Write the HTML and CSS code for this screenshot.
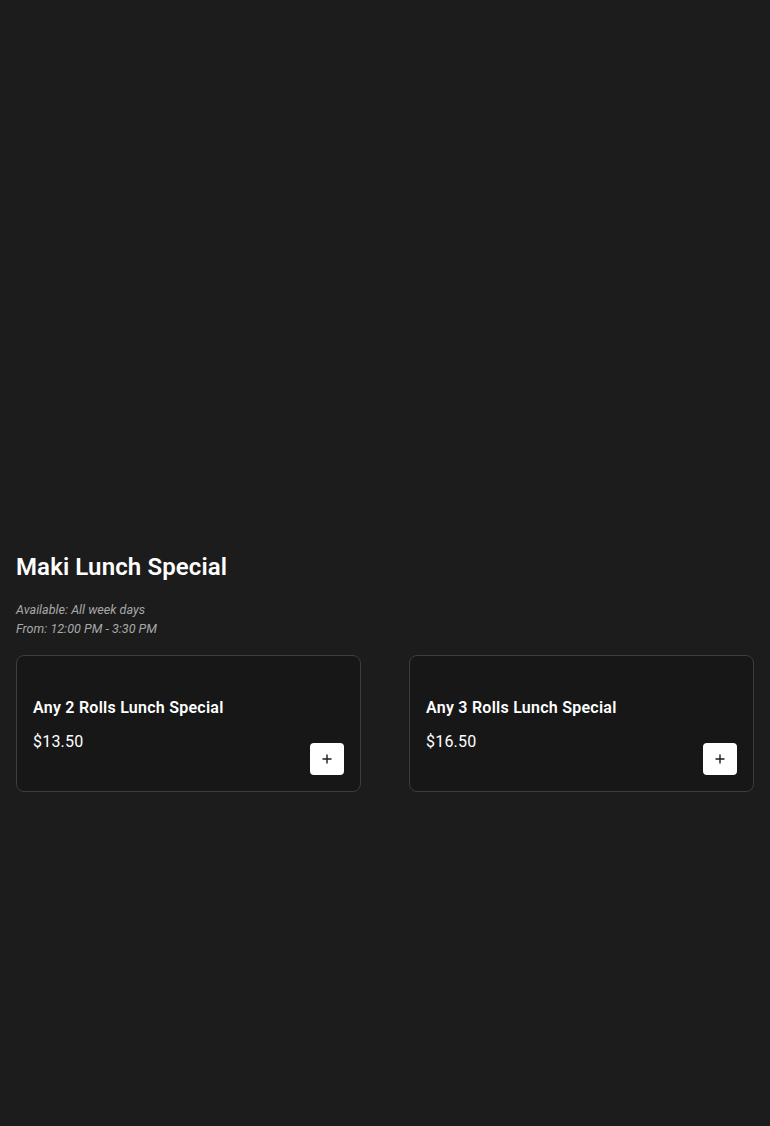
FILE: index.html
```html
<!DOCTYPE html>
<html lang="en">
<head>
<meta charset="utf-8">
<title>Maki Lunch Special</title>
<link rel="stylesheet" href="styles.css">
</head>
<body>
<main class="page">
  <div class="hero"></div>
  <section class="category">
    <h1 class="category-title">Maki Lunch Special</h1>
    <div class="availability">
      <p>Available: All week days</p>
      <p>From: 12:00 PM - 3:30 PM</p>
    </div>
    <div class="items">
      <article class="item">
        <div class="item-info">
          <h2 class="item-name">Any 2 Rolls Lunch Special</h2>
          <div class="item-price">$13.50</div>
        </div>
        <button class="add-btn" aria-label="Add">
          <svg width="12" height="12" viewBox="0 0 12 12"><path d="M6 1.5v9M1.5 6h9" stroke="#1c1c1c" stroke-width="1.4" fill="none"/></svg>
        </button>
      </article>
      <article class="item">
        <div class="item-info">
          <h2 class="item-name">Any 3 Rolls Lunch Special</h2>
          <div class="item-price">$16.50</div>
        </div>
        <button class="add-btn" aria-label="Add">
          <svg width="12" height="12" viewBox="0 0 12 12"><path d="M6 1.5v9M1.5 6h9" stroke="#1c1c1c" stroke-width="1.4" fill="none"/></svg>
        </button>
      </article>
    </div>
  </section>
</main>
</body>
</html>
```

FILE: styles.css
```css
* { box-sizing: border-box; }
html, body {
  margin: 0;
  padding: 0;
  background: #1c1c1c;
  color: #ffffff;
  font-family: Roboto, "Liberation Sans", sans-serif;
}
.page {
  min-height: 1126px;
}
.hero {
  height: 551px;
}
.category {
  padding: 0 16px;
}
.category-title {
  margin: 0;
  font-size: 24px;
  line-height: 32px;
  font-weight: 600;
  letter-spacing: 0.12px;
  color: #ffffff;
}
.availability {
  margin-top: 17px;
}
.availability p {
  margin: 0;
  font-size: 12.6px;
  line-height: 19px;
  font-style: italic;
  color: #a8a8a8;
}
.items {
  margin-top: 17px;
  display: grid;
  grid-template-columns: 1fr 1fr;
  gap: 48px;
}
.item {
  display: flex;
  align-items: flex-end;
  justify-content: space-between;
  height: 137px;
  padding: 16px;
  background: #171717;
  border: 1px solid #3d3d3d;
  border-radius: 8px;
}
.item-info {
  padding-bottom: 21px;
}
.item-name {
  margin: 0;
  font-size: 16px;
  line-height: 24px;
  font-weight: 600;
  letter-spacing: 0.25px;
  color: #ffffff;
}
.item-price {
  margin-top: 10px;
  font-size: 16px;
  line-height: 24px;
  letter-spacing: 0.2px;
  color: #ffffff;
}
.add-btn {
  width: 34px;
  height: 32px;
  padding: 0;
  border: none;
  border-radius: 4px;
  background: #ffffff;
  display: flex;
  align-items: center;
  justify-content: center;
  cursor: pointer;
}
```
